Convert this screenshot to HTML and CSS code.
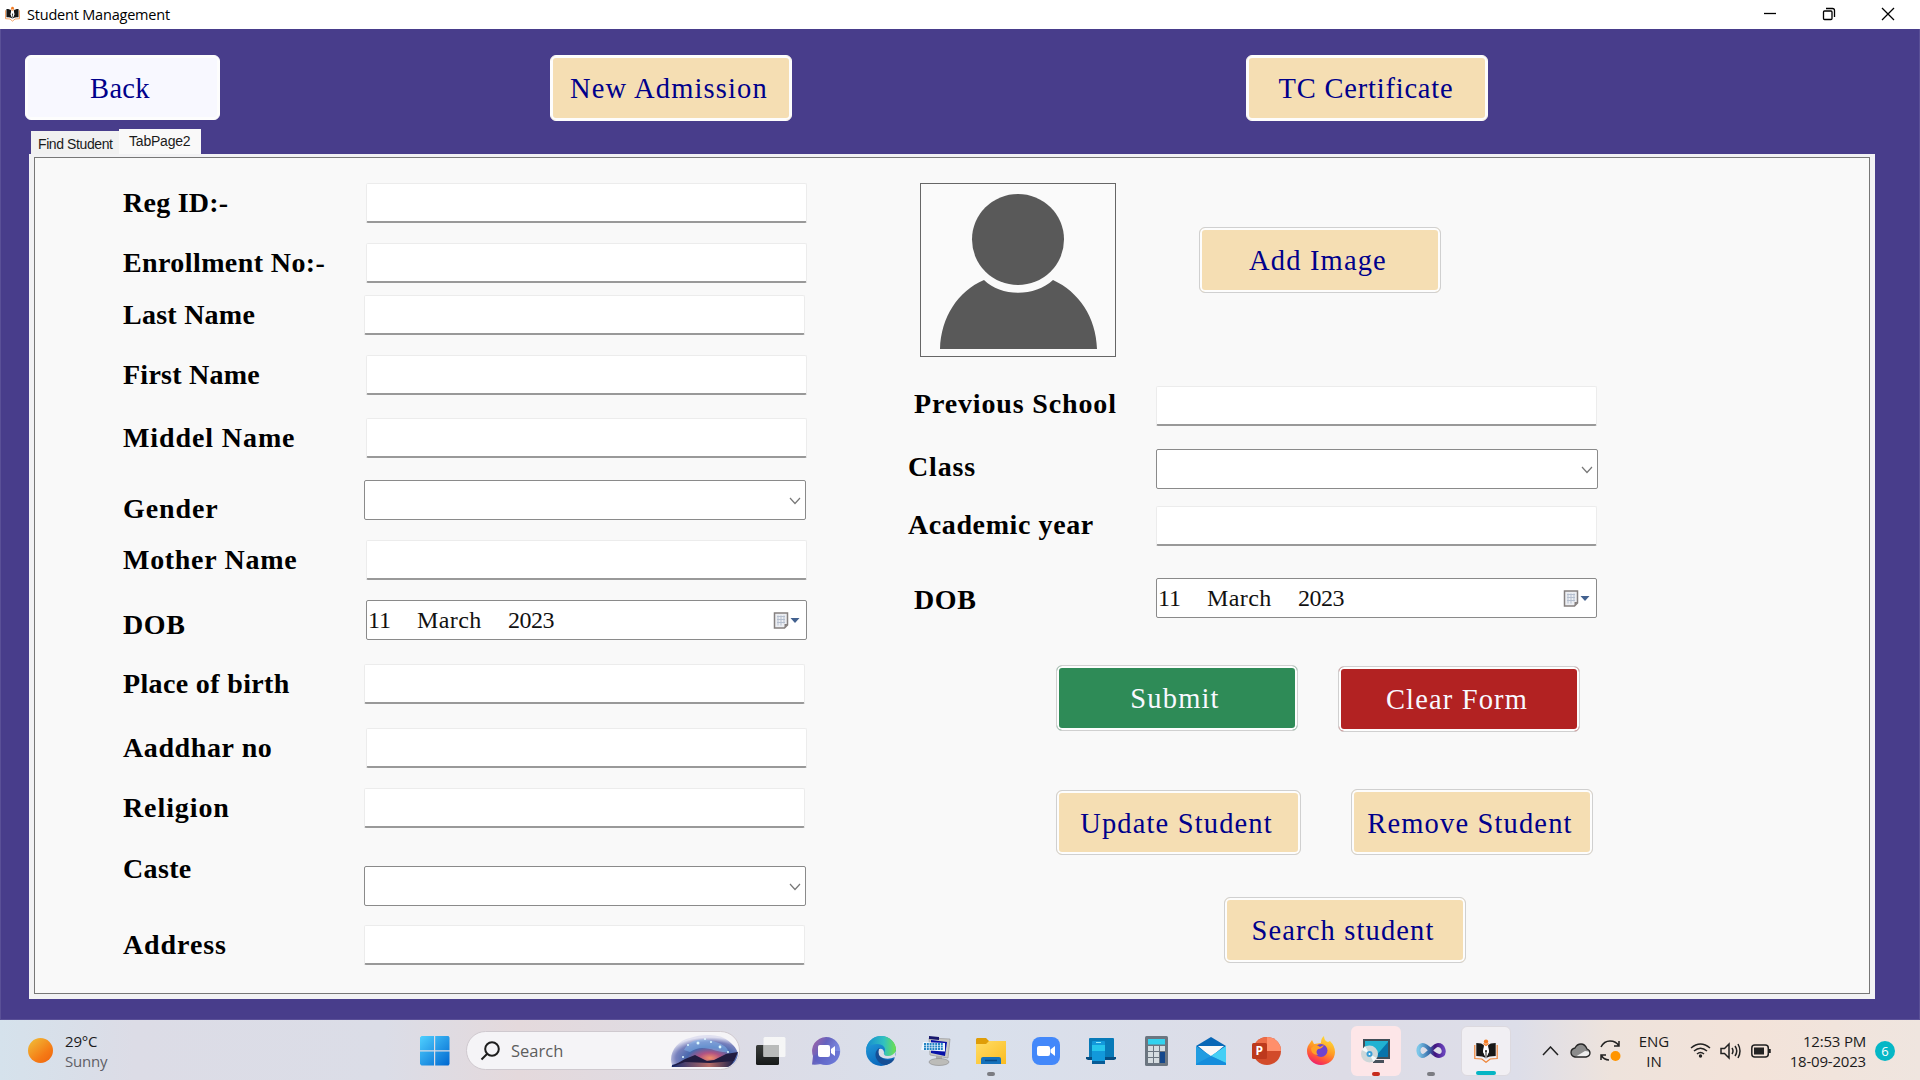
FILE: index.html
```html
<!DOCTYPE html>
<html lang="en">
<head>
<meta charset="utf-8">
<title>Student Management</title>
<link rel="stylesheet" href="styles.css">
</head>
<body>
<svg class="defs" width="0" height="0">
  <defs>
    <symbol id="book" viewBox="0 0 24 24">
      <path d="M.8 6v13.500l7 .5 4.200 3.300 4.200-3.300 7-.5V6" fill="none" stroke="#ef8436" stroke-width="1.200"/>
      <path d="M2.300 4c4 0 6.500.8 7.700 2.500L9 12l3 7.500c-2-1.800-5-2.500-9.700-2.500zM21.700 4c-4 0-6.500.8-7.700 2.500l1 5.500-3 7.500c2-1.800 5-2.500 9.700-2.500z" fill="#171717"/>
      <path d="M10.500 6.500h3L15 13l-3 6-3-6z" fill="#fff"/>
      <path d="M12 12v6" stroke="#222" stroke-width="1"/>
      <circle cx="12" cy="12" r="1" fill="#222"/>
      <circle cx="12" cy="2.600" r="2.200" fill="#f47a20"/>
      <path d="M9.500 4.500l2.500 2 2.500-2" fill="none" stroke="#f47a20" stroke-width="1.200"/>
    </symbol>
    <symbol id="calendar" viewBox="0 0 28 18">
      <path d="M1.500 1h13v12l-3 3h-10z" fill="#eceef2" stroke="#85807f" stroke-width="1.500"/>
      <path d="M4 4.500h8M4 7.500h8M4 10.500h8M5 3.500v10M8 3.500v10M11 3.500v8" stroke="#b5bfcf" stroke-width="1"/>
      <path d="M14.500 12h-3v4z" fill="#85807f"/>
      <path d="M17.500 6h9l-4.500 5z" fill="#42618f"/>
    </symbol>
  </defs>
</svg>

<header class="titlebar">
  <svg class="app-icon" width="15" height="16"><use href="#book"/></svg>
  <span class="app-title">Student Management</span>
  <div class="window-controls">
    <svg width="14" height="14" viewBox="0 0 14 14"><path d="M1 6.500h12"/></svg>
    <svg width="14" height="14" viewBox="0 0 14 14"><rect x="1.500" y="4" width="8.500" height="8.500" rx="1"/><path d="M4 1.500h6.500a2 2 0 0 1 2 2V10"/></svg>
    <svg width="14" height="14" viewBox="0 0 14 14"><path d="M1 1l12 12M13 1L1 13"/></svg>
  </div>
</header>

<main class="window">
  <nav class="toolbar">
    <button class="btn btn-back">Back</button>
    <button class="btn btn-new">New Admission</button>
    <button class="btn btn-tc">TC Certificate</button>
  </nav>
  <div class="tabs">
    <div class="tab">Find Student</div>
    <div class="tab tab-active">TabPage2</div>
  </div>
  <section class="page">
    <div class="page-inner">
      <form class="personal">
        <label class="t-tight">Reg ID:-</label><div class="box inset"></div>
        <label class="t-enroll">Enrollment No:-</label><div class="box inset"></div>
        <label class="t-tight">Last Name</label><div class="box"></div>
        <label class="t-tight">First Name</label><div class="box inset"></div>
        <label class="t-wide">Middel Name</label><div class="box inset"></div>
        <label class="low t-wide">Gender</label><div class="box combo"><svg width="12" height="8" viewBox="0 0 12 8"><path d="M1 1l5 5.500 5-5.500"/></svg></div>
        <label class="t-mother">Mother Name</label><div class="box inset"></div>
        <label class="mid">DOB</label><div class="box date inset"><span class="day">11</span><span class="month">March</span><span>2023</span><svg width="28" height="18"><use href="#calendar"/></svg></div>
        <label class="t-place">Place of birth</label><div class="box"></div>
        <label>Aaddhar no</label><div class="box inset"></div>
        <label class="t-wide">Religion</label><div class="box"></div>
        <label class="high t-place">Caste</label><div class="box combo"><svg width="12" height="8" viewBox="0 0 12 8"><path d="M1 1l5 5.500 5-5.500"/></svg></div>
        <label class="t-wide">Address</label><div class="box"></div>
      </form>

      <div class="academic">
        <div class="photo-row">
          <div class="photo">
            <svg width="194" height="172" viewBox="0 0 194 172">
              <path d="M19 165C20 133 37 107 63 96C80 113 114 113 132 96C158 108 175 133 176 165z" fill="#595959"/>
              <ellipse cx="97" cy="55.500" rx="46" ry="45.500" fill="#595959"/>
            </svg>
          </div>
          <button class="btn">Add Image</button>
        </div>
        <form class="schooling">
          <label class="indent t-prev">Previous School</label><div class="box"></div>
          <label class="t-prev">Class</label><div class="box combo"><svg width="12" height="8" viewBox="0 0 12 8"><path d="M1 1l5 5.500 5-5.500"/></svg></div>
          <label>Academic year</label><div class="box"></div>
          <label class="indent">DOB</label><div class="box date"><span class="day">11</span><span class="month">March</span><span>2023</span><svg width="28" height="18"><use href="#calendar"/></svg></div>
        </form>
        <div class="actions actions-main">
          <button class="btn btn-submit">Submit</button>
          <button class="btn btn-clear">Clear Form</button>
        </div>
        <div class="actions actions-edit">
          <button class="btn btn-update">Update Student</button>
          <button class="btn btn-remove">Remove Student</button>
        </div>
        <div class="actions actions-search">
          <button class="btn">Search student</button>
        </div>
      </div>
    </div>
  </section>
</main>

<footer class="taskbar">
  <div class="weather">
    <span class="sun"></span>
    <div><div>29°C</div><div class="muted">Sunny</div></div>
  </div>
  <div class="start">
    <svg width="30" height="30" viewBox="0 0 30 30">
      <defs><linearGradient id="win" x1="0" y1="0" x2="1" y2="1"><stop offset="0" stop-color="#4fd0ff"/><stop offset="1" stop-color="#0067d0"/></linearGradient></defs>
      <path d="M1.500 0H14v14.300H0V1.500zM15.200 0H28.500L29.500 1.500V14.300H15.200zM0 15.500h14v14H1.500L0 28zM15.200 15.500h14.300V28l-1 1.500H15.200z" fill="url(#win)"/>
    </svg>
  </div>
  <div class="search">
    <svg class="glass" width="20" height="20" viewBox="0 0 20 20"><circle cx="12" cy="8" r="6.800"/><path d="M7 13l-5.500 5.500"/></svg>
    <span>Search</span>
    <svg class="scene" width="69" height="34" viewBox="0 0 69 34">
      <defs>
        <radialGradient id="sky" cx=".58" cy=".72" r=".65"><stop offset="0" stop-color="#f29069"/><stop offset=".25" stop-color="#b05383"/><stop offset=".52" stop-color="#4969ae"/><stop offset=".78" stop-color="#7881bd"/><stop offset="1" stop-color="#e0e0f0"/></radialGradient>
        <linearGradient id="lake"><stop offset="0" stop-color="#172d72"/><stop offset=".6" stop-color="#b66c66"/><stop offset="1" stop-color="#1c204c"/></linearGradient>
      </defs>
      <path d="M2 31C-2 20 7 6 20 4C32-1 49 1 54 4C61 8 67 14 68 20C67 26 64 30 58 33H1z" fill="url(#sky)"/>
      <path d="M14 16C18 7 30 3 43 7C51 9 59 14 58 18C47 20 34 8 20 18z" fill="#83baf0" opacity=".5"/>
      <path d="M2 33V31L18 26H64Q62 32 57 33z" fill="url(#lake)"/>
      <path d="M1 33L15 25L25 21L37 27L44 26L56 20L68 18L64 27L40 29L15 28z" fill="#211c40"/>
      <g fill="#dffaff"><circle cx="18" cy="11" r="1"/><circle cx="28" cy="9" r="1.500"/><circle cx="35" cy="5" r="1"/><circle cx="50" cy="13" r="1.400"/><circle cx="13" cy="23" r="1"/><circle cx="41" cy="8" r="1"/><circle cx="58" cy="18" r="1"/></g>
    </svg>
  </div>
  <div class="apps">
    <div class="app"><svg width="30" height="30" viewBox="0 0 30 30">
      <defs><linearGradient id="dark" x2="0" y2="1"><stop offset="0" stop-color="#393c3a"/><stop offset="1" stop-color="#171a19"/></linearGradient></defs>
      <rect x="0" y="9" width="23" height="20" rx="1.500" fill="url(#dark)"/><rect x="7.500" y="1" width="22" height="20" rx="1.500" fill="#f7f7f7" fill-opacity=".92"/><path d="M7.500 9H23v12H7.500z" fill="#b9bbba"/></svg></div>
    <div class="app"><svg width="30" height="30" viewBox="0 0 30 30">
      <defs><linearGradient id="chat" x1="0" x2="1" y2=".6"><stop offset="0" stop-color="#ad63a2"/><stop offset=".45" stop-color="#6563be"/><stop offset="1" stop-color="#8297ec"/></linearGradient></defs>
      <path d="M15 1A14 14 0 1 1 10 28Q5 29 1 28.500L2 20A14 14 0 0 1 15 1z" fill="url(#chat)"/><path d="M15 15h14c0 9-7 14-14 14-8 0-13-5-13-9z" fill="#595fc5" opacity=".55"/><rect x="7" y="9" width="12" height="12" rx="2" fill="#fff"/><path d="M20 13l4-3v10l-4-3z" fill="#fff"/></svg></div>
    <div class="app"><svg width="30" height="30" viewBox="0 0 30 30">
      <defs><linearGradient id="edgeTop"><stop offset="0" stop-color="#168bd1"/><stop offset=".6" stop-color="#31c1c0"/><stop offset="1" stop-color="#6fe14a"/></linearGradient><linearGradient id="edgeBody" x2=".5" y2="1"><stop offset="0" stop-color="#27a6df"/><stop offset="1" stop-color="#0864ba"/></linearGradient></defs>
      <circle cx="15" cy="15" r="15" fill="url(#edgeBody)"/>
      <path d="M0 14C1 5 8 0 15 0C24 0 30 7 30 13C30 18 26 21 21 20Q17 19 18 17C21 12 17 8 11 8C5 8 1 11 0 14z" fill="url(#edgeTop)"/>
      <path d="M13 12C5 18 12 29 20 29C24 28 27 26 29 22C24 26 15 24 14 18Q13 16 16 14z" fill="#154e95"/>
      <path d="M13 13Q11 20 17 22T29 21L30 15Q27 20 22 20T18 16Q17 12 13 13z" fill="#dadde8"/></svg></div>
    <div class="app"><svg width="31" height="30" viewBox="0 0 31 30">
      <path d="M8 2l21 1-2 19-18-3z" fill="#c9c9c6" stroke="#999" stroke-width=".7"/><path d="M10 4l16 2-2 14-14-3z" fill="#0711a8"/><path d="M8 0l10 1v3L8 3z" fill="#17176c"/>
      <path d="M2 6l22 1v8.500L0 14z" fill="#edf6ff"/><path d="M3 8h19M3 10.500h19M3 13h19" stroke="#2385c4" stroke-width="1.800" stroke-dasharray="2 .8"/>
      <path d="M15 20h6v4h-6z" fill="#aaa"/><ellipse cx="18" cy="26" rx="10" ry="3.500" fill="#bcbcb9" stroke="#888" stroke-width=".6"/></svg></div>
    <div class="app"><svg width="30" height="28" viewBox="0 0 30 28">
      <defs><linearGradient id="folder" x2="1" y2="1"><stop offset="0" stop-color="#ffdd67"/><stop offset="1" stop-color="#fbbc20"/></linearGradient></defs>
      <path d="M0 2l1-1h9l3 3h16l1 2v4H0z" fill="#df9d08"/><path d="M0 7h10l3-3h17v23H0z" fill="url(#folder)"/><path d="M5 27v-5q0-2 2-2h16q2 0 2 2v5z" fill="#1471bb"/><path d="M9 23.500h12" stroke="#084b87" stroke-width="1.500"/></svg><i class="mark"></i></div>
    <div class="app"><svg width="28" height="28" viewBox="0 0 28 28"><rect width="28" height="28" rx="8" fill="#4388fa"/><rect x="5" y="9" width="13" height="10" rx="2" fill="#fff"/><path d="M18.500 12.500L23 9v10l-4.500-3.500z" fill="#fff"/></svg></div>
    <div class="app"><svg width="30" height="28" viewBox="0 0 30 28"><path d="M3 2q0-1 1-1h23q1 0 1 1v18H3z" fill="#087ab8"/><path d="M0 20h30v2l-2 1H2l-2-1z" fill="#064d81"/><rect x="6" y="4" width="13" height="23" rx="1" fill="#1299db"/><path d="M6 8h13v6H6z" fill="#25c5ec"/><path d="M6 24h13v3H6z" fill="#075b96"/><path d="M10 5.500h5" stroke="#8de8fc"/></svg></div>
    <div class="app"><svg width="23" height="30" viewBox="0 0 23 30"><rect width="23" height="30" rx="1.500" fill="#6b7580"/><rect x="3" y="3" width="17" height="5.500" fill="#32d2ee"/><path d="M3 10h5v5H3zM9 10h5v5H9zM15 10h5v5h-5zM3 16h5v5H3zM9 16h5v5H9zM3 22h5v5H3zM9 22h5v5H9z" fill="#d5dce0"/><path d="M15 16h5v11h-5z" fill="#14478b"/></svg></div>
    <div class="app"><svg width="30" height="28" viewBox="0 0 30 28"><path d="M0 9L15 0l15 9-15 13z" fill="#0867b6"/><path d="M2 9h26L15 20z" fill="#f8f8f8"/><path d="M0 9l15 10L30 9v19H0z" fill="#209ce1"/><path d="M15 19L30 9v17z" fill="#45cff5"/><path d="M0 27l15-8 15 7v2H0z" fill="#158ddc"/></svg></div>
    <div class="app"><svg width="29" height="28" viewBox="0 0 29 28"><circle cx="15" cy="14" r="14" fill="#d24b2a"/><path d="M15 0a14 14 0 0 0-14 14h14z" fill="#ed6c47"/><path d="M15 0a14 14 0 0 1 14 14H15z" fill="#ff8f6b"/><rect y="6" width="15" height="16" rx="1.500" fill="#bd391d"/><text class="ppt-letter" x="3.500" y="18">P</text></svg></div>
    <div class="app"><svg width="28" height="29" viewBox="0 0 28 29">
      <defs><linearGradient id="fox" x1=".7" x2=".25" y2="1"><stop offset="0" stop-color="#ffdf38"/><stop offset=".45" stop-color="#ff9b24"/><stop offset=".75" stop-color="#ff4f3d"/><stop offset="1" stop-color="#e91776"/></linearGradient></defs>
      <path d="M3 7l2-3 2 4 7-1Q14 2 17 0Q17 5 21 6l2-1Q28 10 28 16C28 24 21 29 14 29S0 23 0 15Q0 10 3 7z" fill="url(#fox)"/><circle cx="14" cy="14.500" r="6.500" fill="#6e43cf"/><path d="M4 12q5-5 9-1l4-2q-2 4-6 4-3 3 0 6-7 0-7-7z" fill="#ffa126"/></svg></div>
    <div class="app app-alert"><svg width="30" height="26" viewBox="0 0 30 26"><rect x="2" y="1" width="27" height="20" fill="#404e58"/><rect x="4" y="3" width="23" height="16" fill="#20b2d2"/><path d="M14 19L27 4v15z" fill="#0874ab"/><path d="M12 22h11v3H12z" fill="#47505b"/><circle cx="8.500" cy="16" r="8.500" fill="#cdd7d9"/><path d="M8.500 16L1 12l3-4zM8.500 16l7 4-3 4z" fill="#f5f9f9"/><circle cx="8.500" cy="16" r="3" fill="#3ba0d8"/><circle cx="8.500" cy="16" r="1" fill="#fff"/></svg><i class="mark"></i></div>
    <div class="app app-vs"><svg width="30" height="18" viewBox="0 0 30 18"><defs><linearGradient id="vs"><stop offset="0" stop-color="#7dc7e9"/><stop offset=".42" stop-color="#376da9"/><stop offset=".65" stop-color="#42137d"/><stop offset="1" stop-color="#6842ba"/></linearGradient></defs><path d="M15 9C10 3 7 2.500 5 3.500C1 6 2 13 6 14C11 15 17 3 22 3C28 3 29 11 26 13C22 16 18 12 15 9z" fill="none" stroke="url(#vs)" stroke-width="4"/></svg><i class="mark"></i></div>
    <div class="app app-current"><svg width="24" height="24"><use href="#book"/></svg><i class="mark"></i></div>
  </div>
  <div class="tray">
    <svg class="line chevron" width="17" height="10" viewBox="0 0 17 10"><path d="M1 9l7.500-8L16 9"/></svg>
    <svg class="cloud" width="21" height="16" viewBox="0 0 21 16"><path d="M5 14Q1 13 1 9.500T5 5Q7 1 11 1t6 5q3 1 3 4t-4 4z" fill="#8c8c8c"/><path d="M5 14l10-6q5 0 5 3t-4 3z" fill="#eee"/><path d="M5 14Q1 13 1 9.500T5 5Q7 1 11 1t6 5q3 1 3 4t-4 4z" fill="none" stroke="#262626" stroke-width="1.300"/></svg>
    <svg class="line sync" width="22" height="22" viewBox="0 0 22 22"><path d="M1 7Q4 1 10 1t9 5M19 1v5h-5M1 20v-5h5M1 15q3 5 8 5"/><circle cx="15.500" cy="16" r="5" fill="#ff9500" stroke="none"/></svg>
    <div class="lang"><div>ENG</div><div>IN</div></div>
    <svg class="line wifi" width="21" height="15" viewBox="0 0 21 15"><path d="M1 5Q10.500-3 20 5M4 8q6.500-5.500 13 0M7 11q3.500-3 7 0"/><circle cx="10.500" cy="13" r="1.700" fill="#222" stroke="none"/></svg>
    <svg class="line speaker" width="21" height="18" viewBox="0 0 21 18"><path d="M1 6.500h3.500L9 2v14l-4.500-4.500H1zM12 6q2 3 0 6M15 4q3.500 5 0 10M18 2q4 7 0 14"/></svg>
    <svg class="line battery" width="21" height="14" viewBox="0 0 21 14"><rect x=".8" y="1" width="16.500" height="12" rx="3"/><rect x="3" y="3.500" width="10" height="7" fill="#222" stroke="none"/><path d="M18.500 5v4" stroke-width="2.500"/></svg>
    <div class="clock"><div>12:53 PM</div><div>18-09-2023</div></div>
    <span class="count">6</span>
  </div>
</footer>
</body>
</html>
```

FILE: styles.css
```css
* { box-sizing: border-box; }

body {
  margin: 0;
  width: 1920px;
  height: 1080px;
  overflow: hidden;
  display: flex;
  flex-direction: column;
  font-family: "Open Sans", "Noto Sans", sans-serif;
  color: #1b1b1b;
}

svg { display: block; flex: none; }
.defs { display: none; }

/* title bar */
.titlebar {
  flex: none;
  height: 29px;
  display: flex;
  align-items: center;
  padding: 0 25px 1px 5px;
  background: #fff;
}
.app-icon { margin-right: 7px; }
.app-title { font-size: 14.500px; color: #000; letter-spacing: -0.200px; }
.window-controls { margin-left: auto; display: flex; gap: 45px; }
.window-controls svg { fill: none; stroke: #000; stroke-width: 1.300; }

/* window body */
.window {
  flex: none;
  height: 991px;
  background: #483d8b;
  border: 1px solid #5a5097;
  border-top: 0;
  padding: 26px 0 0 24px;
  font-family: "Palatino Linotype", "Book Antiqua", "Liberation Serif", serif;
}
.toolbar { display: flex; height: 74px; align-items: flex-start; }

.btn {
  flex: none;
  width: 242px;
  height: 66px;
  padding: 2px 4px 0 0;
  border: 1px solid #d0d0d0;
  border-radius: 6px;
  box-shadow: inset 0 0 0 2px #fdfdfd;
  background: #f5deb3;
  font: 28.500px "Palatino Linotype", "Book Antiqua", "Liberation Serif", serif;
  letter-spacing: 1.150px;
  color: #00008b;
}
.toolbar .btn { border-color: #fdfdfd; }
.toolbar .btn-back { width: 195px; height: 65px; background: #f8f8ff; padding: 2px 5px 0 0; letter-spacing: .300px; }
.btn-new { margin-left: 330px; }
.toolbar .btn-tc { margin-left: 454px; letter-spacing: .800px; padding-right: 2px; }

.tabs {
  display: flex;
  align-items: flex-end;
  height: 25px;
  padding-left: 6px;
  font: 14px "Liberation Sans", sans-serif;
}
.tab {
  width: 88px;
  height: 23px;
  padding: 5px 0 0 7px;
  letter-spacing: -0.400px;
  background: #f1f1f1;
  white-space: nowrap;
}
.tab-active { width: 82px; height: 25px; padding: 4px 0 0 10px; letter-spacing: -0.200px; background: #f9f9f9; }

.page {
  width: 1846px;
  height: 845px;
  margin-left: 4px;
  padding: 3px 5px 5px;
  background: #f2f2f4;
}
.page-inner {
  height: 837px;
  display: flex;
  padding: 25px 0 0 88px;
  background: #f9f9f9;
  border: 1px solid #777;
}

/* form fields */
label {
  height: 36px;
  margin-top: 2px;
  font-size: 28px;
  line-height: 36px;
  font-weight: bold;
  letter-spacing: .600px;
  color: #000;
  white-space: nowrap;
}
label.low { margin-top: 11px; }
label.mid { margin-top: 7px; }
label.high { margin-top: -15px; }
label.t-enroll { letter-spacing: .400px; }
label.t-prev { letter-spacing: .850px; }
label.t-tight { letter-spacing: .250px; }
label.t-wide { letter-spacing: .900px; }
label.t-mother { letter-spacing: .700px; }
label.t-place { letter-spacing: .350px; }

.personal {
  display: grid;
  width: 684px;
  grid-template-columns: 241px 443px;
  grid-template-rows: 60px 52px 60px 63px 62px 60px 60px 64px 64px 60px 78px 59px 40px;
  align-items: start;
}
.box {
  width: 441px;
  height: 40px;
  background: #fff;
  border: 1px solid #ececec;
  border-bottom: 2px solid #999;
  border-radius: 2px;
}
.inset { margin-left: 2px; }
.combo, .date { border: 1px solid #8a8a8a; display: flex; align-items: center; }
.combo { width: 442px; }
.combo svg { margin: 1px 4px 0 auto; fill: none; stroke: #777; stroke-width: 1.200; }
.date { padding: 1px 5px 0 1px; font-size: 24px; color: #111; }
.date .day { width: 49px; }
.date .month { width: 91px; letter-spacing: .400px; }
.date span:nth-child(3) { letter-spacing: -0.500px; }
.date svg { margin-left: auto; }

/* right-hand side */
.academic { margin-left: 100px; width: 700px; }
.photo-row { display: flex; height: 203px; padding-left: 13px; }
.photo { width: 196px; height: 174px; border: 1px solid #666; background: #fafafa; }
.photo-row .btn { margin: 44px 0 0 83px; }

.schooling {
  display: grid;
  grid-template-columns: 249px 442px;
  grid-template-rows: 63px 57px 72px 40px;
  align-items: start;
}
.schooling label { margin-top: 0; margin-left: 1px; }
.schooling label:nth-of-type(3) { margin-top: 1px; }
.schooling .indent { margin-left: 7px; }
.schooling label:last-of-type { margin-top: 4px; }

.actions { display: flex; align-items: flex-start; height: 67px; }
.actions-main { margin-top: 47px; padding-left: 149px; gap: 40px; }
.btn-submit { background: #2e8b57; color: #f8f8ff; }
.btn-clear { background: #b22222; color: #f8f8ff; margin-top: 1px; }
.actions-edit { margin-top: 57px; padding-left: 149px; gap: 50px; }
.btn-update { width: 245px; height: 65px; margin-top: 1px; padding-top: 2px; }
.btn-remove { padding-top: 3px; }
.actions-search { margin-top: 41px; padding-left: 317px; }

/* taskbar */
.taskbar {
  flex: none;
  height: 60px;
  display: flex;
  align-items: center;
  padding-top: 1px;
  font-size: 15px;
  line-height: 20px;
  background: linear-gradient(90deg, #d5e2ec 0, #dcdce6 7%, #dbdde7 20%, #e4d9dc 27%, #dcdce6 39%, #d9e0ec 50%, #dddce6 70%, #dddee9 79%, #eee3dc 84%, #f3e3d9 91%, #efe5df 100%);
}
.weather { width: 391px; padding-left: 28px; display: flex; align-items: center; gap: 12px; }
.weather div { letter-spacing: -0.200px; }
.sun { width: 25px; height: 25px; border-radius: 50%; background: linear-gradient(140deg, #f0c23a, #f57a15 65%, #ee620d); }
.muted { color: #5e5e66; }
.start { width: 75px; padding-left: 29px; }
.search {
  width: 274px;
  height: 39px;
  display: flex;
  align-items: center;
  padding-left: 13px;
  background: #f5f4f7;
  border: 1px solid #cfc9cf;
  border-radius: 20px;
  font-size: 16.500px;
  color: #5d5d5d;
}
.glass { fill: none; stroke: #1d1d1d; stroke-width: 2; margin-right: 11px; }
.scene { margin-left: auto; }

.apps { display: flex; margin-left: 6px; gap: 5px; }
.app {
  position: relative;
  width: 50px;
  height: 50px;
  display: flex;
  align-items: center;
  justify-content: center;
  border-radius: 6px;
}
.app-alert { background: #fde6e8; }
.app-current { background: #f1eff3; border: 1px solid #dcd9df; }
.mark {
  position: absolute;
  left: 50%;
  bottom: 0;
  width: 8px;
  height: 4px;
  margin-left: -4px;
  border-radius: 2px;
  background: #7b7c82;
}
.app-alert .mark { background: #c72a1c; }
.app-current .mark { width: 20px; margin-left: -10px; background: #06b5c4; }
.ppt-letter { font: bold 12px "Open Sans", sans-serif; fill: #fff; }

.tray { flex: 1; display: flex; align-items: center; padding-left: 31px; }
.line { fill: none; stroke: #222; stroke-width: 1.500; }
.cloud { margin-left: 11px; }
.sync { margin-left: 9px; }
.lang { width: 34px; margin-left: 15px; text-align: center; }
.wifi { margin-left: 19px; }
.speaker { margin-left: 9px; }
.battery { margin-left: 10px; }
.clock { width: 82px; margin-left: 12px; text-align: right; letter-spacing: -0.200px; white-space: nowrap; }
.count {
  width: 20px;
  height: 20px;
  margin-left: 9px;
  border-radius: 50%;
  background: #05b7c6;
  color: #fff;
  font-size: 13px;
  text-align: center;
}
```
